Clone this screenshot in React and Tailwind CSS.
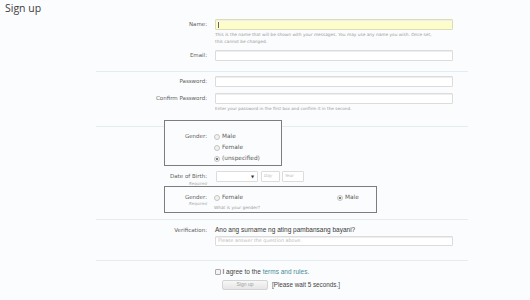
import React from "react";

function Radio({ checked }) {
  return (
    <span className="flex h-[6px] w-[6px] items-center justify-center rounded-full border border-[#c4c4c4] bg-[#f2f2f2]">
      {checked && <span className="h-[2px] w-[2px] rounded-full bg-[#555]" />}
    </span>
  );
}

function RadioItem({ label, checked, className = "" }) {
  return (
    <div className={"flex h-[11px] items-center gap-[2px] " + className}>
      <Radio checked={checked} />
      <span className="text-[5.8px] leading-[11px] text-[#5a5a5a]">{label}</span>
    </div>
  );
}

function Label({ children, w = "w-[111px]", lh = "leading-[11px]" }) {
  return (
    <div className={w + " shrink-0 text-right text-[5.5px] text-[#5f5f5f] " + lh}>{children}</div>
  );
}

function Input({ className = "", tone = "border-[#dcdcdc] bg-white", h = "h-[11px]", children }) {
  return (
    <div
      className={
        h + " w-[238px] rounded-[1px] border shadow-[inset_0_1px_0_#eee] " + tone + " " + className
      }
    >
      {children}
    </div>
  );
}

function Sep({ className = "" }) {
  return <div className={"h-px w-[372px] bg-[#e4ecf0] " + className} />;
}

export default function App() {
  return (
    <div className="min-h-[300px] w-[530px] bg-[#fbfcfd] font-['DejaVu_Sans',sans-serif]">
      <h1 className="h-[19px] pl-[5px] pt-[1px] font-['Open_Sans',sans-serif] text-[10.5px] leading-[14px] text-[#3d3d3d]">
        Sign up
      </h1>
      <div className="ml-[96px] w-[372px]">
        {/* Name */}
        <div className="flex">
          <Label>Name:</Label>
          <div className="ml-[8px]">
            <Input tone="border-[#dedcb8] bg-[#fdfdcc]" className="flex items-center pl-[2px]">
              <span className="h-[6px] w-px bg-[#666]" />
            </Input>
            <p className="mt-[1px] w-[238px] text-[4.3px] leading-[7px] text-[#9a9a9a]">
              This is the name that will be shown with your messages. You may use any name you wish. Once set,
              <br />
              this cannot be changed.
            </p>
          </div>
        </div>
        {/* Email */}
        <div className="mt-[5px] flex">
          <Label>Email:</Label>
          <div className="ml-[8px]">
            <Input />
          </div>
        </div>
        <Sep className="mt-[10px]" />
        {/* Password */}
        <div className="mt-[4px] flex">
          <Label>Password:</Label>
          <div className="ml-[8px]">
            <Input />
          </div>
        </div>
        <div className="mt-[6px] flex">
          <Label>Confirm Password:</Label>
          <div className="ml-[8px]">
            <Input />
            <p className="mt-[1px] text-[4.2px] leading-[7px] text-[#9a9a9a]">
              Enter your password in the first box and confirm it in the second.
            </p>
          </div>
        </div>
        <Sep className="mt-[14px]" />
        {/* Box 1 */}
        <div className="relative -mt-[7px] ml-[68px] w-[118px] border border-[#7d7d7d] bg-[#fbfcfd] pb-[1px] pt-[10px]">
          <div className="flex">
            <Label w="w-[42px]">Gender:</Label>
            <div className="ml-[7px]">
              <RadioItem label="Male" />
              <RadioItem label="Female" />
              <RadioItem label="(unspecified)" checked />
            </div>
          </div>
        </div>
        {/* Date of birth */}
        <div className="mt-[5px] flex">
          <div className="w-[111px] shrink-0 text-right">
            <div className="text-[5.5px] leading-[11px] text-[#5f5f5f]">Date of Birth:</div>
            <div className="text-[4px] italic leading-[4px] text-[#aaa]">Required</div>
          </div>
          <div className="ml-[9px] flex h-[11px] gap-[2px]">
            <div className="flex h-[11px] w-[42px] items-center justify-end rounded-[1px] border border-[#dcdcdc] bg-white pr-[3px] text-[4px] text-[#333]">
              ▼
            </div>
            <div className="ml-[1px] flex h-[11px] w-[19px] items-center rounded-[1px] border border-[#dcdcdc] bg-white pl-[2px] text-[4.2px] italic text-[#bbb]">
              Day
            </div>
            <div className="flex h-[11px] w-[22px] items-center rounded-[1px] border border-[#dcdcdc] bg-white pl-[2px] text-[4.2px] italic text-[#bbb]">
              Year
            </div>
          </div>
        </div>
        {/* Box 2 */}
        <div className="ml-[68px] w-[213px] border border-[#7d7d7d] bg-[#fbfcfd] pb-[1px] pt-[5px]">
          <div className="flex">
            <div className="w-[42px] shrink-0 text-right">
              <div className="text-[5.5px] leading-[11px] text-[#5f5f5f]">Gender:</div>
              <div className="-mt-[1px] text-[4px] italic leading-[4px] text-[#aaa]">Required</div>
            </div>
            <div className="ml-[7px]">
              <div className="flex">
                <RadioItem label="Female" className="w-[123px]" />
                <RadioItem label="Male" checked />
              </div>
              <p className="mt-[1px] text-[4.3px] leading-[7px] text-[#9a9a9a]">What is your gender?</p>
            </div>
          </div>
        </div>
        <Sep className="mt-[6px]" />
        {/* Verification */}
        <div className="mt-[5px] flex">
          <Label lh="leading-[10px]">Verification:</Label>
          <div className="ml-[8px]">
            <div className="font-['Liberation_Sans',sans-serif] text-[6.5px] leading-[10px] text-[#3a3a3a]">
              Ano ang surname ng ating pambansang bayani?
            </div>
            <Input h="h-[10px]" className="mt-[1px] flex items-center pl-[2px]">
              <span className="text-[4.8px] text-[#bbb]">Please answer the question above.</span>
            </Input>
          </div>
        </div>
        <Sep className="mt-[14px]" />
        {/* Agree */}
        <div className="mt-[6px] flex">
          <div className="w-[111px] shrink-0" />
          <div className="ml-[8px] font-['Liberation_Sans',sans-serif]">
            <div className="flex h-[9px] items-center gap-[1.5px]">
              <span className="h-[6px] w-[6px] rounded-[1px] border border-[#aaa] bg-[#f2f2f2]" />
              <span className="text-[6.5px] text-[#444]">
                I agree to the <span className="text-[#4a8c98]">terms and rules.</span>
              </span>
            </div>
            <div className="ml-[7px] mt-[4px] flex items-center gap-[4px]">
              <div className="flex h-[10px] w-[46px] items-center justify-center rounded-[2px] border border-[#d4d4d4] bg-gradient-to-b from-[#f7f7f7] to-[#e6e6e6] text-[5px] text-[#a0a0a0]">
                Sign up
              </div>
              <span className="text-[6.3px] text-[#444]">[Please wait 5 seconds.]</span>
            </div>
          </div>
        </div>
      </div>
    </div>
  );
}
